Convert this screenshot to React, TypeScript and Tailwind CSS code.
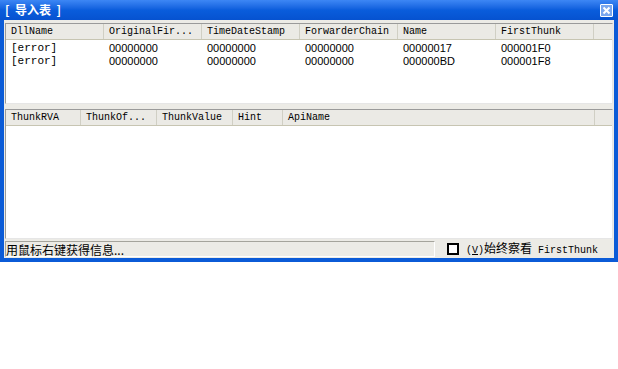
import React from 'react'

const mono = { fontFamily: '"Liberation Mono", "Noto Sans CJK SC", monospace' }

const topCols = [
  { label: 'DllName', w: 'w-[98px]' },
  { label: 'OriginalFir...', w: 'w-[98px]' },
  { label: 'TimeDateStamp', w: 'w-[98px]' },
  { label: 'ForwarderChain', w: 'w-[98px]' },
  { label: 'Name', w: 'w-[98px]' },
  { label: 'FirstThunk', w: 'w-[98px]' },
]

const bottomCols = [
  { label: 'ThunkRVA', w: 'w-[75px]' },
  { label: 'ThunkOf...', w: 'w-[76px]' },
  { label: 'ThunkValue', w: 'w-[76px]' },
  { label: 'Hint', w: 'w-[50px]' },
  { label: 'ApiName', w: 'w-[312px]' },
]

const rows = [
  ['[error]', '00000000', '00000000', '00000000', '00000017', '000001F0'],
  ['[error]', '00000000', '00000000', '00000000', '000000BD', '000001F8'],
]

function Header({ cols }: { cols: { label: string; w: string }[] }) {
  return (
    <div className="flex h-[16px] bg-[#ebeae5] border-b border-[#c7c5b2]">
      {cols.map((c) => (
        <div
          key={c.label}
          className={`${c.w} shrink-0 pl-[5px] text-[10px] leading-[16px] text-black border-r border-[#d0cfc4] whitespace-nowrap overflow-hidden`}
          style={mono}
        >
          {c.label}
        </div>
      ))}
      <div className="flex-1" />
    </div>
  )
}

export default function App() {
  return (
    <div className="w-[618px] h-[369px] bg-white">
      <div className="w-[618px] h-[262px] flex flex-col bg-[#0b5bd7] rounded-t-[2px]">
        <div className="h-[21px] flex items-center justify-between px-[5px] bg-gradient-to-b from-[#3d87f5] via-[#0a5ddc] to-[#0652d0]">
          <span className="text-white text-[12px] font-bold whitespace-pre" style={{ fontFamily: '"Noto Sans CJK SC", sans-serif' }}>
            [  导入表  ]
          </span>
          <div className="w-[13px] h-[13px] bg-[#7aa7ee] border border-white rounded-[1px] flex items-center justify-center">
            <svg width="9" height="9" viewBox="0 0 9 9">
              <path d="M1.5 1.5 L7.5 7.5 M7.5 1.5 L1.5 7.5" stroke="white" strokeWidth="2" />
            </svg>
          </div>
        </div>
        <div className="flex-1 mx-[4px] mb-[4px] bg-[#ecebe6] flex flex-col pt-[3px] px-[1px]">
          <div className="h-[81px] bg-white border border-[#9a9a9a] border-r-[#e6e6e6] border-b-[#e6e6e6] flex flex-col">
            <Header cols={topCols} />
            <div className="pt-[2px]">
              {rows.map((r, i) => (
                <div key={i} className="flex h-[13px]">
                  {r.map((v, j) => (
                    <div
                      key={j}
                      className="w-[98px] shrink-0 pl-[5px] text-[11px] leading-[13px] text-black"
                      style={j === 0 ? { ...mono, fontSize: '11px' } : { fontFamily: '"Liberation Sans", sans-serif' }}
                    >
                      {v}
                    </div>
                  ))}
                </div>
              ))}
            </div>
          </div>
          <div className="h-[5px]" />
          <div className="h-[130px] bg-white border border-[#9a9a9a] border-r-[#e6e6e6] border-b-[#e6e6e6] flex flex-col">
            <Header cols={bottomCols} />
          </div>
          <div className="h-[18px] mt-[1px] flex items-center">
            <div
              className="w-[430px] h-[16px] border border-[#a5a49c] border-r-white border-b-white text-[12px] leading-[15px] text-black whitespace-nowrap"
              style={{ fontFamily: '"Noto Sans CJK SC", sans-serif' }}
            >
              用鼠标右键获得信息...
            </div>
            <div className="ml-[12px] w-[12px] h-[12px] border-2 border-black bg-white" />
            <div className="ml-[7px] text-[12px] leading-[14px] text-black whitespace-nowrap" style={mono}>
              <span className="text-[10px]">(<span className="underline">V</span>)</span>
              <span style={{ fontFamily: '"Noto Sans CJK SC", sans-serif' }}>始终察看</span>
              <span className="text-[10px]"> FirstThunk</span>
            </div>
          </div>
        </div>
      </div>
    </div>
  )
}
